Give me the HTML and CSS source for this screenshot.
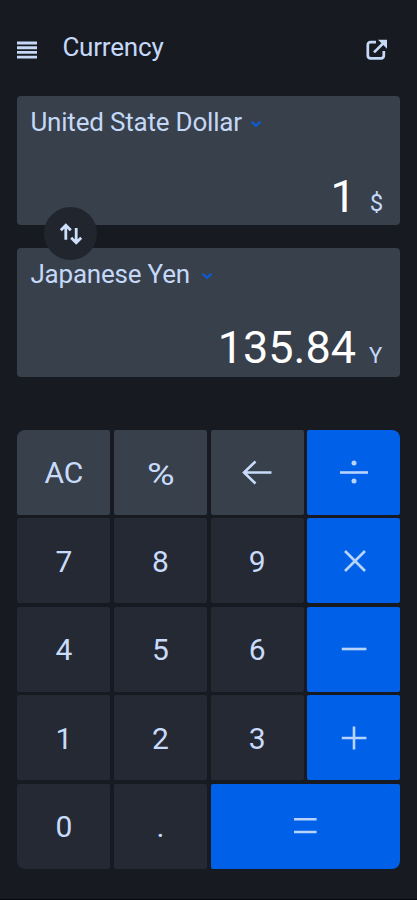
FILE: index.html
```html
<!DOCTYPE html>
<html lang="en">
<head>
<meta charset="utf-8">
<title>Currency</title>
<link rel="stylesheet" href="styles.css">
</head>
<body>
<main class="app">
  <header class="bar">
    <svg class="menu" width="20" height="18" viewBox="0 0 20 18"><path d="M0 2h20M0 6.7h20M0 11.4h20M0 16.1h20" stroke="currentColor" stroke-width="2.9"/></svg>
    <h1 class="title">Currency</h1>
    <svg class="share" width="22" height="22" viewBox="0 0 22 22" fill="none" stroke="currentColor" stroke-width="2.7"><path d="M10 3.2H4.6Q1.8 3.2 1.8 6v10.6q0 2.8 2.8 2.8h10.4q2.8 0 2.8-2.8V12"/><path d="M8 13.4L17.5 4"/><path d="M12 .8h9v9z" fill="currentColor" stroke="none"/></svg>
  </header>
  <section class="card">
    <div class="name name-usd">United State Dollar <svg class="chev" width="12" height="8" viewBox="0 0 12 8"><path d="M1.5 1.8L6 5.8l4.5-4" fill="none" stroke="currentColor" stroke-width="2.2"/></svg></div>
    <div class="amount"><span class="value">1</span><span class="unit unit-usd">$</span></div>
    <button class="swap" aria-label="Swap"><svg width="24" height="22" viewBox="0 0 24 22" fill="none" stroke="currentColor" stroke-width="2.8"><path d="M6.8 16.8V3M1.8 7.2l5-5 5 5M17.2 5v13.5M12.2 14.7l5 5 5-5"/></svg></button>
  </section>
  <section class="card">
    <div class="name name-jpy">Japanese Yen <svg class="chev" width="12" height="8" viewBox="0 0 12 8"><path d="M1.5 1.8L6 5.8l4.5-4" fill="none" stroke="currentColor" stroke-width="2.2"/></svg></div>
    <div class="amount"><span class="value">135.84</span><span class="unit unit-jpy">Y</span></div>
  </section>
  <section class="keys">
    <button class="key fn tl">AC</button>
    <button class="key fn"><span class="pct">%</span></button>
    <button class="key fn"><svg width="30" height="26" viewBox="0 0 30 26"><path d="M29.5 13.5H2M13.5 2.5L2 13.5l11.5 11"/></svg></button>
    <button class="key op tr"><svg width="30" height="26" viewBox="0 0 30 26"><path d="M1 13.5h28"/><circle cx="15" cy="4" r="2.5"/><circle cx="15" cy="22" r="2.5"/></svg></button>
    <button class="key">7</button>
    <button class="key">8</button>
    <button class="key">9</button>
    <button class="key op"><svg width="30" height="26" viewBox="0 0 30 26"><path d="M6 3l20 20M26 3L6 23"/></svg></button>
    <button class="key">4</button>
    <button class="key">5</button>
    <button class="key">6</button>
    <button class="key op"><svg width="30" height="26" viewBox="0 0 30 26"><path d="M2.8 13h24.6"/></svg></button>
    <button class="key">1</button>
    <button class="key">2</button>
    <button class="key">3</button>
    <button class="key op"><svg width="30" height="26" viewBox="0 0 30 26"><path d="M2.8 13h24.6M15 1.5v23"/></svg></button>
    <button class="key bl">0</button>
    <button class="key">.</button>
    <button class="key op wide br"><svg width="30" height="26" viewBox="0 0 30 26"><path d="M4 6.2h22.6M4 19h22.6"/></svg></button>
  </section>
</main>
</body>
</html>
```
FILE: styles.css
```css
* {
  box-sizing: border-box;
}

body {
  margin: 0;
  background: #171a21;
  color: #c5d8f8;
  font-family: Roboto, "Liberation Sans", sans-serif;
}

.app {
  height: 900px;
  padding: 0 16.8px 0 17.4px;
  border-bottom: 1px solid #08080f;
}

.bar {
  display: flex;
  align-items: center;
  height: 96px;
}

.menu {
  margin-top: 3px;
}

.title {
  margin: -2px 0 0 25px;
  font-size: 26px;
  font-weight: 400;
  line-height: 30px;
  letter-spacing: -0.2px;
}

.share {
  margin: 3px 12.4px 0 auto;
}

.card {
  position: relative;
  display: flex;
  flex-direction: column;
  justify-content: space-between;
  height: 128.5px;
  margin-bottom: 23.5px;
  padding: 11px 17px 0 13px;
  border-radius: 4px;
  background: #37404b;
}

.name {
  display: flex;
  align-items: center;
  gap: 8px;
  font-size: 26px;
  line-height: 30px;
  letter-spacing: -0.2px;
  white-space: nowrap;
}

.chev {
  margin-top: 4px;
  color: #0d5bdc;
}

.name-jpy {
  gap: 11px;
}

.amount {
  display: flex;
  align-items: baseline;
  justify-content: flex-end;
  margin-bottom: -6.5px;
  line-height: 54px;
}

.value {
  color: #fff;
  font-size: 45px;
}

.unit {
  margin-left: 14px;
  font-size: 24px;
}

.unit-usd {
  transform: translateY(-1.5px);
}

.unit-jpy {
  margin-left: 13px;
  padding-right: 1px;
  font-size: 22px;
}

.swap {
  position: absolute;
  z-index: 1;
  left: 27px;
  top: 111px;
  display: flex;
  align-items: center;
  justify-content: center;
  width: 53px;
  height: 53px;
  padding: 0;
  border: 0;
  border-radius: 50%;
  background: #20252e;
  color: #cfe0fc;
}

.keys {
  display: grid;
  grid-template-columns: repeat(4, 1fr);
  grid-auto-rows: 84.8px;
  gap: 3.7px;
  margin-top: 53.5px;
}

.key {
  display: flex;
  align-items: center;
  justify-content: center;
  padding: 2px 0 0;
  border: 0;
  border-radius: 2px;
  background: #242933;
  color: #c9dbfa;
  font: 400 30px/36px Roboto, "Liberation Sans", sans-serif;
}

.key svg {
  margin-top: -2px;
  fill: none;
  stroke: currentColor;
  stroke-width: 2.6;
}

.key circle {
  fill: currentColor;
  stroke: none;
}

.pct {
  font-size: 32px;
  transform: translateY(1px) scaleX(1.18);
}

.fn {
  background: #37404b;
}

.op {
  background: #0061e8;
  color: #b9d3ff;
}

.wide {
  grid-column: span 2;
}

.tl { border-top-left-radius: 8px; }
.tr { border-top-right-radius: 8px; }
.bl { border-bottom-left-radius: 8px; }
.br { border-bottom-right-radius: 8px; }
```
